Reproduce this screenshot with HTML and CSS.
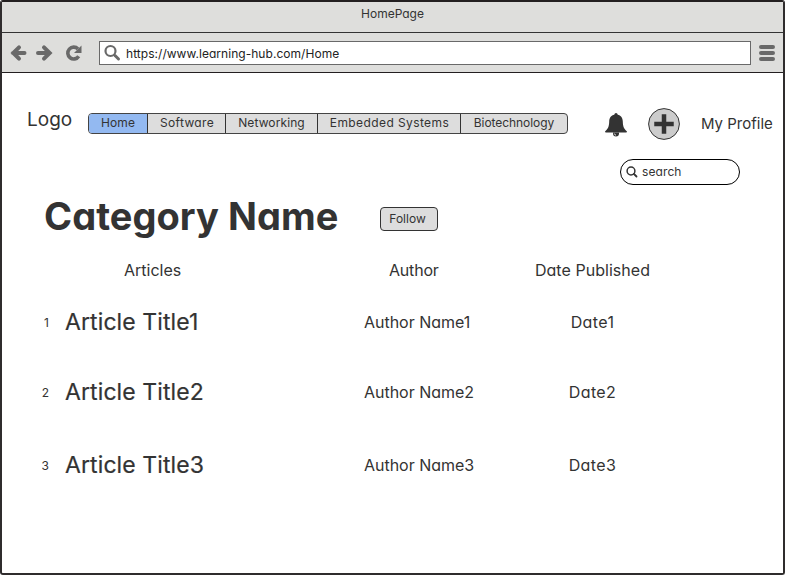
FILE: index.html
```
<!DOCTYPE html>
<html lang="en">
<head>
<meta charset="utf-8">
<title>HomePage</title>
<link rel="stylesheet" href="styles.css">
</head>
<body>
<div class="window">
  <header class="titlebar">HomePage</header>
  <div class="toolbar">
    <svg class="arrows" width="74" height="20" viewBox="0 0 74 20" fill="none" stroke="#696969" stroke-width="4" stroke-linecap="round">
      <path d="M3 10H14.500M9 4.300L3.300 10L9 15.700"/>
      <path d="M28 10H39M34 4.300L39.700 10L34 15.700"/>
      <path d="M68.700 13.200A5.900 5.900 0 1 1 68 6" stroke-width="3.600" stroke-linecap="butt"/>
      <path d="M71.500 2.500V10H64Z" fill="#696969" stroke="none"/>
    </svg>
    <div class="address">
      <svg width="18" height="18" viewBox="0 0 18 18" fill="none" stroke="#696969"><circle cx="6.500" cy="7" r="5" stroke-width="2.200"/><path d="M11 11.500L14.500 15" stroke-width="3" stroke-linecap="round"/></svg>
      <span>https://www.learning-hub.com/Home</span>
    </div>
    <svg class="menu" width="16" height="16" viewBox="0 0 16 16" stroke="#696969" stroke-width="4" stroke-linecap="round"><path d="M2 2H14M2 8H14M2 14H14"/></svg>
  </div>
  <main>
    <div class="top">
      <span class="logo">Logo</span>
      <nav>
        <a class="home active">Home</a>
        <a class="software">Software</a>
        <a class="networking">Networking</a>
        <a class="embedded">Embedded Systems</a>
        <a class="biotech">Biotechnology</a>
      </nav>
      <svg class="bell" width="24" height="26" viewBox="0 0 24 26" fill="#333"><circle cx="12" cy="2.500" r="1.600"/><path d="M12 2.500C7.500 2.500 5.300 5.500 5.200 9.500C5.100 14.500 4 17 1 19.500C1 20.500 2 20.500 3 20.500H21C22 20.500 23 20.500 23 19.500C20 17 18.900 14.500 18.800 9.500C18.700 5.500 16.500 2.500 12 2.500Z"/><path d="M9 20.500V21.500A3 3 0 0 0 15 21.500V20.500Z"/><path d="M10.300 21.500Q10.500 23 12 23.200" fill="none" stroke="#fff" stroke-width=".8"/></svg>
      <svg class="add" width="32" height="32" viewBox="0 0 32 32"><circle cx="16" cy="16" r="15.400" fill="#ccc" stroke="#333"/><path d="M16 8.500V23.500M8.500 16H23.500" stroke="#333" stroke-width="4.500" stroke-linecap="square" stroke-linejoin="round"/></svg>
      <span class="profile">My Profile</span>
    </div>
    <div class="search">
      <svg width="12" height="12" viewBox="0 0 12 12" fill="none" stroke="#333"><circle cx="5" cy="5" r="3.900" stroke-width="1.500"/><path d="M8 8L10.500 10.500" stroke-width="1.800" stroke-linecap="round"/></svg>
      <span>search</span>
    </div>
    <div class="heading"><h1>Category Name</h1><button>Follow</button></div>
    <div class="row head"><span></span><span>Articles</span><span class="author">Author</span><span class="date">Date Published</span></div>
    <div class="row"><span class="num first">1</span><span class="title">Article Title1</span><span class="name">Author Name1</span><span class="date wide">Date1</span></div>
    <div class="row"><span class="num">2</span><span class="title">Article Title2</span><span class="name">Author Name2</span><span class="date wide">Date2</span></div>
    <div class="row last"><span class="num">3</span><span class="title">Article Title3</span><span class="name">Author Name3</span><span class="date wide">Date3</span></div>
  </main>
</div>
</body>
</html>
```
FILE: styles.css
```
* { box-sizing: border-box; }
body {
  margin: 0;
  font: 12px/16px Inter, "Liberation Sans", sans-serif;
  font-feature-settings: "cv11";
  color: #333;
  white-space: nowrap;
}
svg { display: block; flex: none; }
.window {
  height: 575px;
  border: 2px solid #2f2c2d;
  border-top-color: #231f20;
  border-radius: 3px;
  overflow: hidden;
  background: #fff;
}
.titlebar {
  height: 31px;
  padding-top: 4px;
  text-align: center;
  background: #dededc;
  border-bottom: 1px solid #333;
}
.toolbar {
  display: flex;
  align-items: center;
  height: 40px;
  padding: 0 8px;
  background: #dededc;
  border-bottom: 1px solid #231f20;
}
.arrows { margin: 1px 15px 0 0; }
.address {
  display: flex;
  align-items: center;
  width: 652px;
  height: 24px;
  padding-left: 4px;
  background: #fff;
  border: 1px solid #696969;
  margin-top: 1px;
}
.address span { margin: 1px 0 0 4px; letter-spacing: .04px; color: #222; }
.menu { margin: 1px 0 0 8px; }
.top { display: flex; align-items: flex-start; height: 86px; padding: 35px 0 0 25px; }
.logo { width: 61px; margin-top: 3px; font-size: 19px; line-height: 18px; }
nav {
  display: flex;
  width: 480px;
  height: 21px;
  margin-top: 5px;
  border: 1px solid #444;
  border-radius: 4px;
  background: #ddd;
  overflow: hidden;
}
nav a { border-right: 1px solid #333; text-align: center; line-height: 18px; }
.home { width: 59px; letter-spacing: .15px; }
.active { background: #93b9f1; }
.software { width: 78px; padding-left: 1px; letter-spacing: .35px; }
.networking { width: 92px; letter-spacing: .1px; }
.embedded { width: 143px; padding-left: 1px; letter-spacing: .4px; }
.biotech { width: 106px; border-right: 0; letter-spacing: -.05px; }
.bell { margin: 4px 0 0 36px; }
.add { margin-left: 20px; }
.profile { margin: 8px 0 0 21px; font-size: 15px; }
.search {
  display: flex;
  align-items: center;
  width: 120px;
  height: 26px;
  margin-left: 618px;
  padding-left: 5px;
  border: 1px solid #000;
  border-radius: 13px;
}
.search span { margin-left: 4px; letter-spacing: .1px; }
.heading { display: flex; height: 75px; padding: 8px 0 0 42px; }
h1 { width: 336px; margin: 0; font-size: 38px; line-height: 46px; letter-spacing: .05px; }
button {
  width: 58px;
  height: 24px;
  margin-top: 14px;
  padding: 0 3px 1px 0;
  border: 1px solid #333;
  border-radius: 4px;
  background: #ddd;
  color: #333;
  font: inherit;
  font-feature-settings: inherit;
}
.row {
  display: grid;
  grid-template-columns: 63px 299px 168px 121px;
  align-items: center;
  height: 70px;
  font-size: 16px;
  line-height: 20px;
}
.head { height: 20px; margin-bottom: 7px; }
.head span:nth-child(2) { padding-left: 59px; }
.head .author { padding-left: 25px; letter-spacing: -.2px; }
.date { text-align: center; letter-spacing: .05px; }
.wide { letter-spacing: .4px; }
.num { padding: 2px 16px 0 0; text-align: right; font-size: 12px; }
.title { font-size: 23px; letter-spacing: .1px; -webkit-text-stroke: .2px #333; }
.name { letter-spacing: -.02px; }
.last { margin-top: 3px; }
```
